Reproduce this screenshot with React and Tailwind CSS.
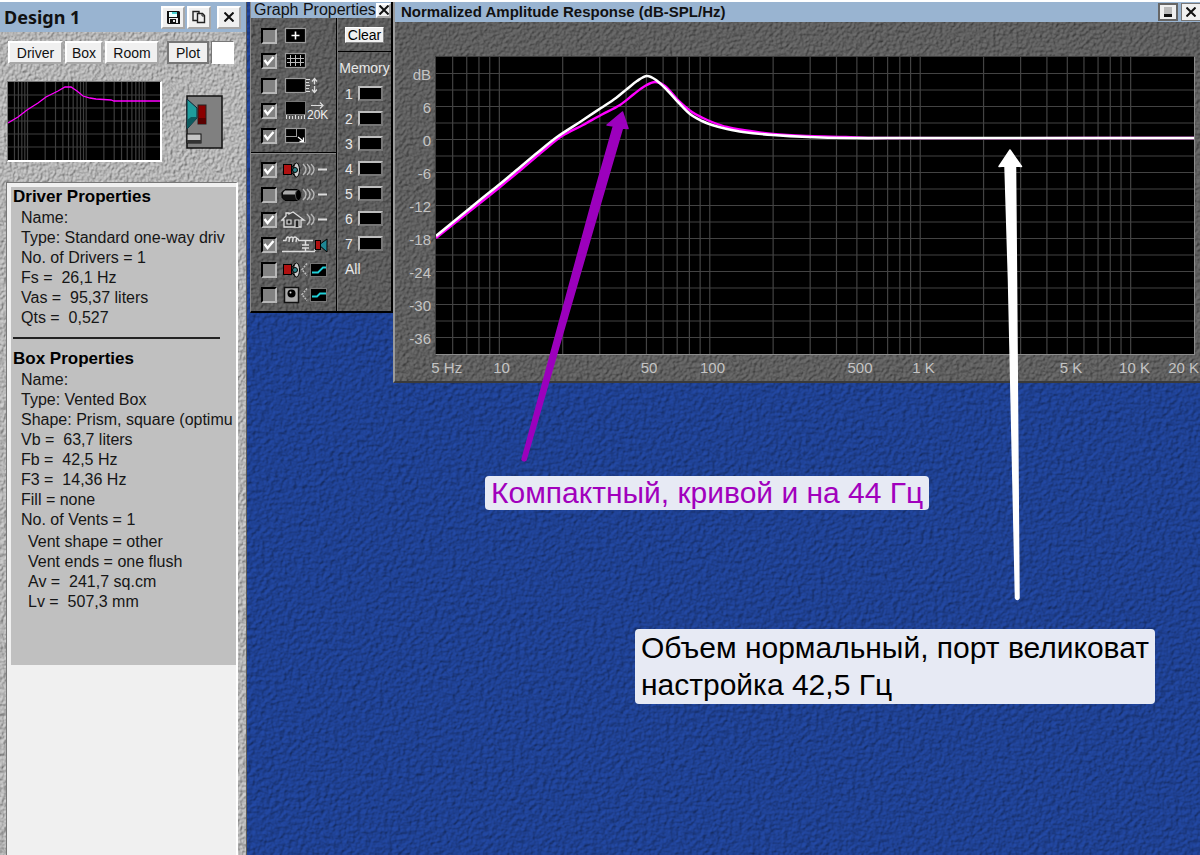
import React from "react";

const FONT = "font-['Liberation_Sans',Arial,sans-serif]";

function Texture({ id, color, frequency = "0.3 0.3", depth = 1.2, seed = 3 }) {
  return (
    <svg className="pointer-events-none absolute inset-0 h-full w-full" aria-hidden="true">
      <filter id={id} x="0" y="0" width="100%" height="100%" colorInterpolationFilters="sRGB">
        <feTurbulence type="fractalNoise" baseFrequency={frequency} numOctaves="2" seed={seed} />
        <feDiffuseLighting surfaceScale={depth} diffuseConstant="1.15" lightingColor={color}>
          <feDistantLight azimuth="225" elevation="60" />
        </feDiffuseLighting>
      </filter>
      <rect width="100%" height="100%" filter={`url(#${id})`} />
    </svg>
  );
}

/* ---------- frequency scale and curves ---------- */

const PLOT_W = 758;
const PLOT_H = 297;
const freqX = (f) => (Math.log10(f / 5) / Math.log10(4000)) * PLOT_W;

const FREQUENCIES = [];
for (const decade of [1, 10, 100, 1000, 10000]) {
  for (let n = 1; n < 10; n++) {
    const f = n * decade;
    if (f > 5 && f < 20000) FREQUENCIES.push(f);
  }
}

const WHITE_CURVE = [
  [0, 179], [44, 143], [64, 127], [82, 112], [101, 96], [121, 80], [144, 65], [165, 51],
  [180, 41], [191, 32], [201, 24], [211, 19], [220, 23], [231, 33], [242, 45],
  [254, 57], [266, 64], [276, 68], [291, 72], [307, 75], [337, 78], [372, 80], [412, 81], [470, 81], [758, 81],
];
const MAGENTA_CURVE = [
  [0, 181], [44, 146], [64, 130], [87, 111], [107, 94], [126, 79], [147, 68], [165, 58],
  [184, 48], [198, 37], [209, 29], [219, 25], [229, 29], [242, 43], [256, 55],
  [267, 61], [276, 65], [291, 70], [307, 73], [337, 77], [372, 79], [410, 80], [440, 81], [758, 81],
];

function smoothPath(points) {
  let d = `M${points[0][0]} ${points[0][1]}`;
  for (let i = 0; i < points.length - 1; i++) {
    const a = points[Math.max(0, i - 1)];
    const b = points[i];
    const c = points[i + 1];
    const e = points[Math.min(points.length - 1, i + 2)];
    const limit = (c[0] - b[0]) / 3;
    const s1 = (c[1] - a[1]) / (c[0] - a[0] || 1);
    const s2 = (e[1] - b[1]) / (e[0] - b[0] || 1);
    d += `C${b[0] + limit} ${b[1] + s1 * limit} ${c[0] - limit} ${c[1] - s2 * limit} ${c[0]} ${c[1]}`;
  }
  return d;
}

function ResponsePlot() {
  return (
    <svg
      className="block h-[297px] w-full bg-black"
      viewBox={`0 0 ${PLOT_W} ${PLOT_H}`}
      preserveAspectRatio="none"
      role="img"
      aria-label="Normalized amplitude response"
    >
      <g stroke="#434343" strokeWidth="1.2">
        {FREQUENCIES.map((f) => (
          <line key={f} x1={freqX(f)} x2={freqX(f)} y1="0" y2={PLOT_H} />
        ))}
        {Array.from({ length: 17 }, (_, i) => (
          <line key={i} x1="0" x2={PLOT_W} y1={16.5 * (i + 1)} y2={16.5 * (i + 1)} />
        ))}
      </g>
      <path d={smoothPath(MAGENTA_CURVE)} fill="none" stroke="#ff00ff" strokeWidth="2.4" />
      <path d={smoothPath(WHITE_CURVE)} fill="none" stroke="#ffffff" strokeWidth="2.6" />
    </svg>
  );
}

function MiniPlot() {
  const decade = 58.7;
  return (
    <svg className="block h-[78px] w-[152px] bg-black" viewBox="0 0 152 78" role="img" aria-label="Plot preview">
      <g stroke="#3e3e3e" strokeWidth="1.2">
        {FREQUENCIES.filter((f) => f <= 1000).map((f) => {
          const x = 19.5 + Math.log10(f / 10) * decade;
          return <line key={f} x1={x} x2={x} y1="0" y2="78" />;
        })}
        {[13, 26, 39, 52, 65].map((y) => (
          <line key={y} x1="0" x2="152" y1={y} y2={y} />
        ))}
      </g>
      <path
        d="M0 41 L10 35 L19 28 L30 21 L38 15 L50 9 L57 5 L63 5 L69 9 L75 14 L82 16 L88 17 L103 18 L106 19 L152 19"
        fill="none"
        stroke="#ff00ff"
        strokeWidth="1.3"
      />
    </svg>
  );
}

/* ---------- small drawings ---------- */

function FloppyIcon() {
  return (
    <svg className="h-[13px] w-[13px]" viewBox="0 0 13 13" aria-hidden="true">
      <path d="M0 0h12l1 1v12H1l-1-1z" fill="#111" />
      <rect x="2" y="1" width="8" height="5" fill="#e8ffff" />
      <rect x="5" y="1" width="5" height="2" fill="#48cfd0" />
      <rect x="2" y="7" width="9" height="5" fill="#eee" />
      <rect x="3" y="8" width="6" height="4" fill="#111" />
      <rect x="6" y="9" width="2" height="2" fill="#eee" />
    </svg>
  );
}

function CopyIcon() {
  return (
    <svg className="h-[14px] w-[14px]" viewBox="0 0 14 14" fill="#eee" stroke="#222" aria-hidden="true">
      <path d="M1 1.5h6v9H1z" strokeWidth="1.4" />
      <path d="M5.5 3.5h5l2 2v7h-7z" strokeWidth="1.4" />
      <path d="M10 3.500v2.500h2.500" fill="none" />
    </svg>
  );
}

function CrossIcon() {
  return (
    <svg className="h-[10px] w-[10px] shrink-0" viewBox="0 0 10 10" stroke="#111" strokeWidth="2" aria-hidden="true">
      <path d="M.5.5l9 9M9.500.5l-9 9" />
    </svg>
  );
}

function DriverBoxIcon() {
  return (
    <svg className="h-[54px] w-[37px]" viewBox="0 0 37 54" role="img" aria-label="Driver in box">
      <rect x="1" y="1" width="35" height="52" fill="#808080" stroke="#111" strokeWidth="1.5" />
      <path d="M1 4l10 9v10L1 34z" fill="#1f9c9c" stroke="#123" />
      <path d="M1 25l4-3h6v1L1 34z" fill="#0d5a5e" />
      <rect x="12" y="10" width="8" height="19" fill="#8a0000" stroke="#222" />
      <path d="M12 23h8v6h-8z" fill="#5a0000" />
      <rect x="1" y="39" width="14" height="9" fill="#c4c4c4" stroke="#111" />
      <path d="M1 45h14v3H1z" fill="#333" />
    </svg>
  );
}

function Screen() {
  return <rect x="4.500" y="2.500" width="20" height="14" fill="#000" stroke="#9a9a9a" strokeWidth="1.2" />;
}

function SmallDriver() {
  return (
    <g stroke="#000">
      <rect x="2.500" y="4.500" width="8" height="10" fill="#b01010" />
      <path d="M10.500 8l4-5v14l-4-5z" fill="#555" />
      <ellipse cx="15.500" cy="10" rx="3" ry="7" fill="#ccc" />
      <circle cx="14" cy="10" r="2.500" fill="#2a7f86" />
    </g>
  );
}

function Waves({ count = 3 }) {
  const xs = [22, 26, 30].slice(3 - count);
  return (
    <g fill="none" stroke="#b5b5b5" strokeWidth="1.5">
      {xs.map((x) => (
        <path key={x} d={`M${x} 4q6 5.500 0 11`} />
      ))}
      <path d="M37 9.500h9" strokeWidth="2" stroke="#ddd" />
    </g>
  );
}

function Eq({ d }) {
  return (
    <g fill="none">
      <path d="M26 3.500l-5 6l5 6" stroke="#bbb" strokeDasharray="2 1" strokeWidth="1.500" />
      <rect x="29.500" y="3.500" width="16" height="13" fill="#000" stroke="#777" />
      <path d={d} stroke="#20d0d8" strokeWidth="1.8" />
    </g>
  );
}

const ICONS = {
  cursor: (
    <>
      <Screen />
      <path d="M14.500 5.500v8M10.500 9.500h8" stroke="#fff" strokeWidth="1.6" />
    </>
  ),
  grid: (
    <>
      <Screen />
      <path d="M9.500 4v11M14.500 4v11M19.500 4v11M6 7.500h17M6 11.500h17" stroke="#bbb" strokeWidth="1" />
    </>
  ),
  vertical: (
    <>
      <Screen />
      <path d="M25 3.500h4M25 6.500h3M25 9.500h4M25 12.500h3M25 15.500h4" stroke="#ddd" />
      <path d="M33.500 2.500v6M31 5.500l2.500-3l2.500 3M33.500 10v6M31 13.500l2.500 3l2.500-3" stroke="#ddd" fill="none" strokeWidth="1.3" />
    </>
  ),
  horizontal: (
    <>
      <rect x="4.500" y=".5" width="20" height="13" fill="#000" stroke="#777" />
      <path d="M5.500 14v4M8.500 15v3M11.500 15v3M14.500 14v4M17.500 15v3M20.500 15v3M23.500 14v4" stroke="#ddd" />
      <path d="M30 4.500h12M39 1.500l3 3l-3 3" stroke="#ddd" fill="none" strokeWidth="1.2" />
      <text x="26" y="18" fill="#eee" fontSize="12">20K</text>
    </>
  ),
  resize: (
    <>
      <Screen />
      <path d="M15.500 3v7M5 10.500h11" stroke="#999" />
      <path d="M17 11l5 4M22.500 11.500v4h-4" stroke="#fff" fill="none" strokeWidth="1.3" />
    </>
  ),
  driver: (
    <>
      <SmallDriver />
      <Waves />
    </>
  ),
  box: (
    <>
      <path d="M4 4.500h13l3 3v5l-3 3H4l-3-3v-5z" fill="#111" stroke="#000" />
      <path d="M4 5.500h12l-2 4H2v-2z" fill="#aaa" />
      <ellipse cx="17.500" cy="10" rx="3" ry="5.500" fill="#000" stroke="#555" />
      <Waves />
    </>
  ),
  room: (
    <>
      <path d="M1 10l4-4V3h3v1l4-2l11 8h-3v7H3v-7z" fill="#444" stroke="#ddd" strokeWidth="1.300" />
      <path d="M6 10h4v4H6zM14 17v-7h4v7" fill="#222" stroke="#ddd" strokeWidth="1.200" />
      <Waves count={2} />
    </>
  ),
  network: (
    <>
      <path d="M2 5.500h3M18 5.500h14M1 16.500h33M34 16v-2" stroke="#ddd" fill="none" strokeWidth="1.300" />
      <path d="M5 6q0-4 2-4t1 5q0-5 2.500-5t1 5q0-5 2.500-5t1 5q0-5 2-3l1 2" stroke="#ddd" fill="none" strokeWidth="1.300" />
      <path d="M24.500 6v4M24.500 13v3M21 10h7M21 13h7" stroke="#ddd" strokeWidth="1.500" />
      <path d="M38 10l8-6v13z" fill="#1f8795" stroke="#000" />
      <rect x="34.500" y="5.500" width="5" height="9" fill="#b01010" stroke="#000" />
    </>
  ),
  driverEq: (
    <>
      <SmallDriver />
      <Eq d="M31 12.500h6l5-5h3" />
    </>
  ),
  boxEq: (
    <>
      <rect x="3.500" y="2.500" width="14" height="15" fill="#aaa" stroke="#111" strokeWidth="1.500" />
      <circle cx="10.500" cy="8.500" r="4" fill="#000" />
      <circle cx="9.500" cy="7.500" r="1" fill="#ddd" />
      <Eq d="M31 11.500h5l3-3h6" />
    </>
  ),
};

/* ---------- controls ---------- */

function PropertyToggle({ icon, label, checked }) {
  return (
    <label className="flex h-[25px] items-center gap-1">
      <span className="grid h-4 w-4 place-items-center">
        <input
          type="checkbox"
          defaultChecked={checked}
          aria-label={label}
          className="peer col-start-1 row-start-1 h-4 w-4 appearance-none border-2 border-t-black border-r-[#b8b8b8] border-b-[#b8b8b8] border-l-black bg-[#828282]"
        />
        <svg className="pointer-events-none col-start-1 row-start-1 hidden h-3 w-3 peer-checked:block" viewBox="0 0 12 12" aria-hidden="true">
          <path d="M1.500 5l3 4l6-7" fill="none" stroke="#fff" strokeWidth="2.400" />
        </svg>
      </span>
      <svg className="h-5 w-12" viewBox="0 0 48 20" aria-hidden="true">
        {ICONS[icon]}
      </svg>
    </label>
  );
}

const raised = "border-2 border-t-white border-l-white border-r-[#a8a8a8] border-b-[#a8a8a8] bg-[#f0f0f0]";

function CaptionButton({ label, children, className }) {
  return (
    <button type="button" aria-label={label} className={`flex shrink-0 items-center justify-center ${raised} ${className}`}>
      {children}
    </button>
  );
}

const PLOT_TOGGLES = [
  ["cursor", "Cursor", false],
  ["grid", "Grid", true],
  ["vertical", "Vertical scale", false],
  ["horizontal", "Extend to 20K", true],
  ["resize", "Resize", true],
];
const SOURCE_TOGGLES = [
  ["driver", "Driver", true],
  ["box", "Vent", false],
  ["room", "Room", true],
  ["network", "Network", true],
  ["driverEq", "Driver equalization", false],
  ["boxEq", "Box equalization", false],
];

/* ---------- windows ---------- */

function Line({ children }) {
  return <li className="h-5 whitespace-pre">{children}</li>;
}

function DesignWindow() {
  return (
    <section className="relative flex w-[247px] shrink-0 flex-col border-r border-[#5a5a5a]">
      <Texture id="stone-light" color="#b6b6b6" frequency="0.36 0.3" depth={1.1} />
      <header className="relative flex h-[30px] items-center bg-[#99b4d1] pr-[5px] pl-1">
        <h1 className="flex-1 font-['Noto_Sans','Open_Sans',sans-serif] text-[18px] leading-[28px] font-bold text-[#111]">Design 1</h1>
        <div className="flex gap-[2px]">
          <CaptionButton label="Save" className="h-[23px] w-6"><FloppyIcon /></CaptionButton>
          <CaptionButton label="Copy" className="h-[23px] w-6"><CopyIcon /></CaptionButton>
          <CaptionButton label="Close" className="ml-1 h-[23px] w-6"><CrossIcon /></CaptionButton>
        </div>
      </header>

      <div className="relative flex gap-[2px] pt-[9px] pl-2 text-[14px] leading-4 text-[#111]">
        <button type="button" className={`h-[23px] w-[55px] ${raised}`}>Driver</button>
        <button type="button" className={`h-[23px] w-[38px] ${raised}`}>Box</button>
        <button type="button" className={`h-[23px] w-[54px] ${raised}`}>Room</button>
        <button type="button" className="ml-[6px] h-[23px] w-[42px] border-2 border-[#777] bg-[#f0f0f0]">Plot</button>
        <button type="button" aria-label="Plot color" className="h-[23px] w-[23px] border border-t-[#777] border-r-white border-b-white border-l-[#777] bg-white" />
      </div>

      <div className="relative mt-[17px] flex items-center gap-6 pl-[7px]">
        <div className="border-t border-r-2 border-b-2 border-l border-t-[#777] border-r-white border-b-white border-l-[#777]">
          <MiniPlot />
        </div>
        <DriverBoxIcon />
      </div>

      <div className="relative mt-5 mr-[8px] ml-[6px] flex-1 border-t border-r-2 border-l border-t-[#777] border-r-white border-l-[#777] bg-[#f0f0f0] pt-1 pl-1">
        <div className="h-[478px] overflow-hidden bg-[#c0c0c0] pl-[2px] text-[16px] leading-5 text-[#161616]">
          <h2 className="h-[21px] text-[17px] font-bold text-black">Driver Properties</h2>
          <ul className="pl-2">
            <Line>Name:</Line>
            <Line>Type: Standard one-way driv</Line>
            <Line>No. of Drivers = 1</Line>
            <Line>{"Fs =  26,1 Hz"}</Line>
            <Line>{"Vas =  95,37 liters"}</Line>
            <Line>{"Qts =  0,527"}</Line>
          </ul>
          <hr className="mt-[9px] mr-4 mb-[10px] border-t-2 border-[#222]" />
          <h2 className="h-[21px] text-[17px] font-bold text-black">Box Properties</h2>
          <ul className="pl-2">
            <Line>Name:</Line>
            <Line>Type: Vented Box</Line>
            <Line>Shape: Prism, square (optimu</Line>
            <Line>{"Vb =  63,7 liters"}</Line>
            <Line>{"Fb =  42,5 Hz"}</Line>
            <Line>{"F3 =  14,36 Hz"}</Line>
            <Line>Fill = none</Line>
            <Line>No. of Vents = 1</Line>
          </ul>
          <ul className="mt-[2px] pl-[15px]">
            <Line>Vent shape = other</Line>
            <Line>Vent ends = one flush</Line>
            <Line>{"Av =  241,7 sq.cm"}</Line>
            <Line>{"Lv =  507,3 mm"}</Line>
          </ul>
        </div>
      </div>
    </section>
  );
}

function GraphPropertiesWindow() {
  return (
    <section className="relative w-[143px] shrink-0 border-r-2 border-b-2 border-l border-r-black border-b-black border-l-[#888]">
      <Texture id="stone-tools" color="#5e5e5e" seed={8} />
      <header className="relative flex h-4 items-center justify-between bg-[#99b4d1] pl-[3px]">
        <h2 className="min-w-0 text-[16px] leading-4 whitespace-nowrap text-[#111]">Graph Properties</h2>
        <CaptionButton label="Close" className="h-[15px] w-[15px]"><CrossIcon /></CaptionButton>
      </header>
      <div className="relative flex">
        <div className="flex-1 border-r border-black pt-[5px] pb-1">
          <div className="pl-[10px]">
            {PLOT_TOGGLES.map(([icon, label, on]) => (
              <PropertyToggle key={icon} icon={icon} label={label} checked={on} />
            ))}
          </div>
          <hr className="mt-1 mb-1 border-t border-black shadow-[0_1px_0_#8a8a8a]" />
          <div className="pl-[10px]">
            {SOURCE_TOGGLES.map(([icon, label, on]) => (
              <PropertyToggle key={icon} icon={icon} label={label} checked={on} />
            ))}
          </div>
        </div>
        <div className="w-[54px] border-l border-[#777] text-[14px] leading-4 text-[#e8e8e8]">
          <div className="flex h-[34px] items-center justify-center border-b border-black">
            <button type="button" className="h-4 border border-t-white border-l-white border-r-[#888] border-b-[#888] bg-[#f0f0f0] px-[2px] leading-[14px] text-black">
              Clear
            </button>
          </div>
          <h3 className="mt-2 text-center">Memory</h3>
          <ol className="mt-[5px]">
            {[1, 2, 3, 4, 5, 6, 7].map((n) => (
              <li key={n} className="flex h-[25px] items-center gap-[5px] pl-[7px]">
                <span>{n}</span>
                <button
                  type="button"
                  aria-label={`Memory ${n}`}
                  className="h-[15px] w-[25px] border-2 border-t-[#bdbdbd] border-r-[#777] border-b-[#777] border-l-[#bdbdbd] bg-black"
                />
              </li>
            ))}
            <li className="flex h-[25px] items-center pl-[7px]">All</li>
          </ol>
        </div>
      </div>
    </section>
  );
}

const X_LABELS = [
  ["5 Hz", 5.5], ["10", 10], ["50", 50], ["100", 100], ["500", 500],
  ["1 K", 1000], ["5 K", 5000], ["10 K", 10000], ["20 K", 17100],
];

function ResponseWindow() {
  return (
    <section className="relative min-w-0 flex-1 overflow-hidden border-b-2 border-l-2 border-b-[#3a3a3a] border-l-[#9a9a9a]">
      <Texture id="stone-dark" color="#606060" seed={5} />
      <header className="relative flex h-5 items-center gap-[3px] bg-[#99b4d1] pl-[6px]">
        <h2 className="flex-1 truncate text-[15px] leading-5 font-bold text-[#111]">
          Normalized Amplitude Response (dB-SPL/Hz)
        </h2>
        <button type="button" aria-label="Minimize" className="flex h-[18px] w-5 items-center justify-center border-2 border-[#666] bg-[#f0f0f0]">
          <svg className="h-[10px] w-[8px]" viewBox="0 0 8 10" aria-hidden="true">
            <rect width="8" height="8" fill="#bbb" />
            <rect y="7" width="8" height="3" fill="#111" />
          </svg>
        </button>
        <button type="button" aria-label="Close" className="flex h-[18px] w-[19px] items-center justify-center border border-r-0 border-[#777] bg-[#f0f0f0]">
          <CrossIcon />
        </button>
      </header>
      <div className="relative flex pt-[34px] pr-[5px] text-[15px] leading-4 text-[#c4c4c4]">
        <ul className="w-[40px] pt-[2px] pr-[4px] text-right">
          {["dB", "6", "0", "-6", "-12", "-18", "-24", "-30", "-36"].map((t) => (
            <li key={t} className="flex h-[33px] items-center justify-end">{t}</li>
          ))}
        </ul>
        <div className="min-w-0 flex-1">
          <div className="border border-t-[#3c3c3c] border-r-[#8c8c8c] border-b-[#8c8c8c] border-l-[#3c3c3c]">
            <ResponsePlot />
          </div>
          <div className="relative h-[26px]">
            {X_LABELS.map(([text, f]) => (
              <span
                key={text}
                className="absolute top-[5px] -translate-x-1/2 whitespace-nowrap"
                style={{ left: `${((freqX(f) + 3) / PLOT_W) * 100}%` }}
              >
                {text}
              </span>
            ))}
          </div>
        </div>
      </div>
    </section>
  );
}

/* ---------- notes placed over the desktop ---------- */

function Annotations() {
  return (
    <>
      <svg className="pointer-events-none absolute top-0 left-0 h-[620px] w-[1100px]" viewBox="0 0 1100 620" aria-hidden="true">
        <path
          d="M622.500 112L628 128.500L622.500 128L601.500 200L526 460Q524 462 522 459.500L592.500 200L613.500 126L607 125Z"
          fill="#9c00bd" stroke="#9c00bd" strokeWidth="1.500" strokeLinejoin="round"
        />
        <path
          d="M1010 150L1021.500 166.500L1015.500 166L1016.500 280L1019 598Q1017 601 1015.500 598L1008.500 280L1005 166L999 166.500Z"
          fill="#fff" stroke="#fff" strokeWidth="1.500" strokeLinejoin="round"
        />
      </svg>
      <p className="absolute top-[476px] left-[485px] rounded bg-[#e7eaf4] px-[6px] text-[30px] leading-[34px] whitespace-nowrap text-[#a100bd]">
        Компактный, кривой и на 44 Гц
      </p>
      <p className="absolute top-[629px] left-[635px] rounded bg-[#e7eaf4] px-[6px] pb-[1px] text-[30px] leading-[37px] whitespace-nowrap text-black">
        Объем нормальный, порт великоват
        <br />
        настройка 42,5 Гц
      </p>
    </>
  );
}

export default function App() {
  return (
    <main className={`relative flex min-h-screen overflow-hidden bg-[#1f4093] ${FONT}`}>
      <Texture id="desktop" color="#1f4193" frequency="0.22 0.24" depth={1.1} seed={11} />
      <div className="relative flex min-w-0 flex-1 items-stretch border-t-2 border-white">
        <DesignWindow />
        <div className="flex min-w-0 flex-1 items-start pl-[3px]">
          <GraphPropertiesWindow />
          <ResponseWindow />
        </div>
      </div>
      <Annotations />
    </main>
  );
}
